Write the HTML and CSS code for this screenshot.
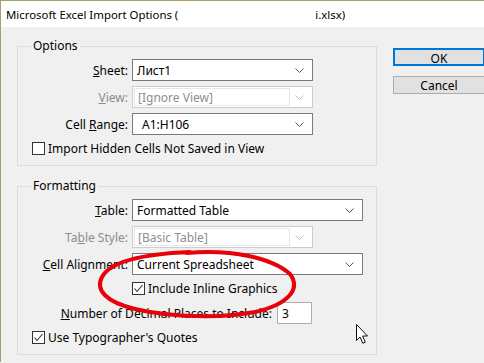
FILE: index.html
```html
<!DOCTYPE html>
<html lang="en">
<head>
  <meta charset="UTF-8">
  <title>Microsoft Excel Import Options</title>
  <link rel="stylesheet" href="styles.css">
</head>
<body>
<div class="window">
  <div class="titlebar">
    <span>Microsoft Excel Import Options (</span><span class="blank"></span><span>i.xlsx)</span>
  </div>

  <div class="content">
    <div class="main">
      <div class="group">
        <div class="group-title">Options</div>
        <div class="rows">
          <label class="lbl"><u>S</u>heet:</label>
          <div class="select narrow">
            <span>Лист1</span>
            <svg class="chev" width="9" height="5" viewBox="0 0 9 5"><polyline points="0.5,0.5 4.5,4.5 8.5,0.5"/></svg>
          </div>

          <label class="lbl off"><u>V</u>iew:</label>
          <div class="select narrow disabled">
            <span class="inner">[Ignore View]</span>
            <svg class="chev" width="9" height="5" viewBox="0 0 9 5"><polyline points="0.5,0.5 4.5,4.5 8.5,0.5"/></svg>
          </div>

          <label class="lbl">Cell <u>R</u>ange:</label>
          <div class="select narrow edit">
            <span>A1:H106</span>
            <svg class="chev" width="9" height="5" viewBox="0 0 9 5"><polyline points="0.5,0.5 4.5,4.5 8.5,0.5"/></svg>
          </div>
        </div>
        <div class="check">
          <svg class="box" width="13" height="13" viewBox="0 0 13 13"><rect x="0.5" y="0.5" width="12" height="12"/></svg>
          <span>Import Hidden Cells Not Saved in View</span>
        </div>
      </div>

      <div class="group second">
        <div class="group-title">Formatting</div>
        <div class="rows">
          <label class="lbl"><u>T</u>able:</label>
          <div class="select wide">
            <span>Formatted Table</span>
            <svg class="chev" width="9" height="5" viewBox="0 0 9 5"><polyline points="0.5,0.5 4.5,4.5 8.5,0.5"/></svg>
          </div>

          <label class="lbl off">Ta<u>b</u>le Style:</label>
          <div class="select narrow disabled">
            <span class="inner">[Basic Table]</span>
            <svg class="chev" width="9" height="5" viewBox="0 0 9 5"><polyline points="0.5,0.5 4.5,4.5 8.5,0.5"/></svg>
          </div>

          <label class="lbl"><u>C</u>ell Alignment:</label>
          <div class="select wide">
            <span>Current Spreadsheet</span>
            <svg class="chev" width="9" height="5" viewBox="0 0 9 5"><polyline points="0.5,0.5 4.5,4.5 8.5,0.5"/></svg>
          </div>

          <span></span>
          <div class="check inset">
            <svg class="box" width="13" height="13" viewBox="0 0 13 13"><rect x="0.5" y="0.5" width="12" height="12"/><polyline class="tick" points="2.5,6.5 5,9.5 10.5,3"/></svg>
            <span>Include Inline Graphics</span>
          </div>
        </div>

        <div class="number-row">
          <label class="lbl"><u>N</u>umber of Decimal Places to Include:</label>
          <div class="field">3</div>
        </div>

        <div class="check">
          <svg class="box" width="13" height="13" viewBox="0 0 13 13"><rect x="0.5" y="0.5" width="12" height="12"/><polyline class="tick" points="2.5,6.5 5,9.5 10.5,3"/></svg>
          <span>Use Typographer's Quotes</span>
        </div>
      </div>
    </div>

    <div class="buttons">
      <button class="btn default">OK</button>
      <button class="btn">Cancel</button>
    </div>
  </div>
</div>

<svg class="overlay" width="484" height="363" viewBox="0 0 484 363">
  <path class="circle" d="M187 253 C232 249 272 258 290 274 C302 290 286 305 255 312 C224 318 174 318 135 309 C106 302 95 290 102 277 C110 262 142 254 190 252"/>
  <path class="cursor" d="M356.5 324.5 L356.5 340.5 L360 337 L362.8 343.3 L365.3 342.2 L362.6 336 L367.5 336 Z"/>
</svg>
</body>
</html>
```

FILE: styles.css
```css
html, body {
  margin: 0;
  overflow: hidden;
}
body {
  font-family: "Noto Sans", "Liberation Sans", sans-serif;
  font-size: 12px;
  color: #000;
  background: #f0f0f0;
  width: 484px;
  height: 363px;
  position: relative;
}
.window {
  border-top: 1px solid #a3a36c;
  border-left: 1px solid #a3a36c;
  width: 520px;
  height: 362px;
  box-sizing: border-box;
}
.titlebar {
  height: 26px;
  background: white;
  display: flex;
  align-items: center;
  padding-left: 5px;
  white-space: nowrap;
  font-size: 11.4px;
}
.blank {
  display: inline-block;
  width: 137px;
}
.content {
  display: flex;
  background: #f0f0f0;
  height: 335px;
}
.main {
  padding: 19px 0 0 16px;
}
.group {
  width: 360px;
  box-sizing: border-box;
  border: 1px solid #dcdcdc;
  padding-bottom: 8px;
}
.group.second {
  margin-top: 20px;
}
.group-title {
  display: block;
  width: fit-content;
  height: 16px;
  line-height: 16px;
  margin: -9px 0 0 13px;
  padding: 0 2px;
  background: #f0f0f0;
}
.rows {
  display: grid;
  grid-template-columns: 110px auto;
  column-gap: 4px;
  row-gap: 5px;
  margin-top: 5px;
  justify-items: start;
}
.lbl {
  justify-self: end;
  align-self: center;
  white-space: nowrap;
}
.lbl.off {
  color: #8c8c8c;
}
.select {
  height: 22px;
  box-sizing: border-box;
  border: 1px solid #7a7a7a;
  background: white;
  display: flex;
  align-items: center;
  justify-content: space-between;
  padding: 0 8px 0 4px;
}
.select.narrow {
  width: 181px;
}
.select.wide {
  width: 231px;
}
.select.edit {
  padding-left: 9px;
}
.select.disabled {
  border-color: #cccccc;
  color: #8f8f8f;
  padding: 1px 8px 1px 1px;
  align-items: stretch;
}
.select.disabled .inner {
  width: 151px;
  border: 1px solid #e6e6e6;
  display: flex;
  align-items: center;
  padding-left: 3px;
}
.chev {
  fill: none;
  stroke: #555;
  stroke-width: 1;
  align-self: center;
}
.disabled .chev {
  stroke: #c0c0c0;
}
.check {
  display: flex;
  align-items: center;
  gap: 3px;
  height: 17px;
  margin: 5px 0 0 14px;
  white-space: nowrap;
}
.check.inset {
  margin: 0;
}
.box {
  flex: none;
}
.box rect {
  fill: white;
  stroke: #333;
}
.box .tick {
  fill: none;
  stroke: #333;
  stroke-width: 1.1;
}
.number-row {
  display: grid;
  grid-template-columns: 254px 35px;
  column-gap: 5px;
  margin-top: 5px;
}
.field {
  height: 22px;
  box-sizing: border-box;
  border: 1px solid #adadad;
  background: white;
  display: flex;
  align-items: center;
  padding-left: 4px;
}
.buttons {
  display: flex;
  flex-direction: column;
  gap: 10px;
  padding: 21px 0 0 16px;
}
.btn {
  width: 92px;
  height: 18px;
  box-sizing: border-box;
  font: inherit;
  padding: 0;
  background: #e1e1e1;
  border: 1px solid #adadad;
  color: #000;
}
.btn.default {
  border: 2px solid #0078d7;
}
.overlay {
  position: absolute;
  left: 0;
  top: 0;
  pointer-events: none;
}
.circle {
  fill: none;
  stroke: #e8000a;
  stroke-width: 4;
  stroke-linecap: round;
}
.cursor {
  fill: white;
  stroke: #111;
  stroke-width: 1;
  stroke-linejoin: miter;
}
```
